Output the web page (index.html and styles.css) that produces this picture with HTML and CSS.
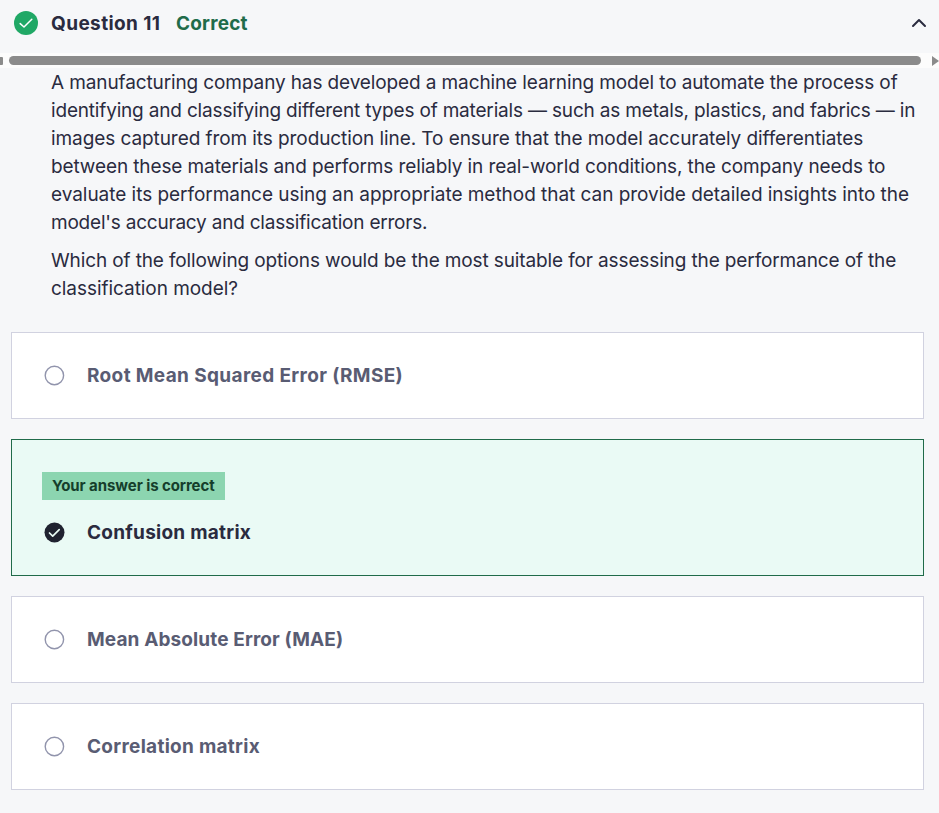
FILE: index.html
```html
<!DOCTYPE html>
<html lang="en">
<head>
<meta charset="utf-8">
<title>Question 11</title>
<link rel="stylesheet" href="styles.css">
</head>
<body>
<header class="question-header">
  <svg class="status" viewBox="0 0 24 24"><circle cx="12" cy="12" r="12"/><path d="M6.200 12.600l3.800 3.400 7.800-7.800"/></svg>
  <h1 class="title">Question 11</h1>
  <span class="result">Correct</span>
  <svg class="chevron" viewBox="0 0 16 12"><path d="M2 9L8 3l6 6"/></svg>
</header>
<div class="scrollbar"><i class="stub"></i><i class="thumb"></i><i class="arrow"></i></div>
<main>
  <section class="prompt">
    <p><span class="l1">A manufacturing company has developed a machine learning model to automate the process of</span>
    <span class="l2">identifying and classifying different types of materials — such as metals, plastics, and fabrics — in</span>
    <span class="l3">images captured from its production line. To ensure that the model accurately differentiates</span>
    <span class="l4">between these materials and performs reliably in real-world conditions, the company needs to</span>
    <span class="l5">evaluate its performance using an appropriate method that can provide detailed insights into the</span>
    <span class="l6">model's accuracy and classification errors.</span></p>
    <p><span class="l7">Which of the following options would be the most suitable for assessing the performance of the</span>
    <span class="l8">classification model?</span></p>
  </section>
  <section class="answers">
    <div class="answer"><div class="choice"><svg class="radio" viewBox="0 0 20 20"><circle cx="10.400" cy="9.500" r="9.200"/></svg><span class="a1">Root Mean Squared Error (RMSE)</span></div></div>
    <div class="answer correct"><div class="badge"><span>Your answer is correct</span></div><div class="choice"><svg class="radio checked" viewBox="0 0 20 20"><circle cx="10.500" cy="10.500" r="10"/><path d="M5.500 11l3.200 3.200 6.500-6.500"/></svg><span class="a2">Confusion matrix</span></div></div>
    <div class="answer"><div class="choice"><svg class="radio" viewBox="0 0 20 20"><circle cx="10.400" cy="9.500" r="9.200"/></svg><span class="a3">Mean Absolute Error (MAE)</span></div></div>
    <div class="answer"><div class="choice"><svg class="radio" viewBox="0 0 20 20"><circle cx="10.400" cy="9.500" r="9.200"/></svg><span class="a4">Correlation matrix</span></div></div>
  </section>
</main>
</body>
</html>
```
FILE: styles.css
```css
* { box-sizing: border-box; }
body { margin: 0; height: 813px; overflow: hidden; background: #f6f7f9; color: #2a2b3f; font-family: Inter, "Liberation Sans", sans-serif; }
svg { display: block; flex: none; overflow: visible; fill: none; stroke-linecap: round; stroke-linejoin: round; }
.question-header { height: 53px; padding: 0 12px 7px 14px; display: flex; align-items: center; font-size: 19px; font-weight: 700; }
.status { width: 24px; height: 24px; margin-right: 13px; }
.status circle { fill: #20a866; }
.status path { stroke: #fff; stroke-width: 1.5; }
.title { margin: 0; width: 125px; font-size: inherit; white-space: nowrap; letter-spacing: .4px; }
.result { color: #206b4a; letter-spacing: .2px; }
.chevron { width: 16px; height: 12px; margin-left: auto; }
.chevron path { stroke: #2a2b3f; stroke-width: 2; }
.scrollbar { height: 15px; display: flex; align-items: center; background: #fcfcfc; }
.stub { width: 3px; height: 8px; background: #8b8b8b; border-radius: 0 1px 1px 0; }
.thumb { width: 912px; height: 9px; margin-left: 6px; border-radius: 5px; background: #8b8b8b; }
.arrow { margin-left: 11px; border-left: 7px solid #8b8b8b; border-top: 5px solid transparent; border-bottom: 5px solid transparent; }
.prompt { padding: 1px 0 0 51px; font-size: 19px; line-height: 28px; }
.prompt p { margin: 0 0 10px; }
.prompt span { display: block; white-space: nowrap; }
.l1 { letter-spacing: -.117px; }
.l2 { letter-spacing: -.177px; }
.l3 { letter-spacing: -.078px; }
.l4 { letter-spacing: -.112px; }
.l5 { letter-spacing: -.038px; }
.l6 { letter-spacing: -.215px; }
.l7 { letter-spacing: -.125px; }
.l8 { letter-spacing: -.05px; }
.answers { padding: 19px 15px 0 11px; display: grid; gap: 20px; }
.answer { height: 87px; padding: 0 32px; border: 1px solid #d1d2e0; background: #fff; color: #595c73; font-size: 19px; font-weight: 700; }
.choice { height: 85px; display: flex; align-items: center; gap: 23px; white-space: nowrap; }
.a1 { letter-spacing: .36px; }
.a2 { letter-spacing: .25px; }
.a3 { letter-spacing: .12px; }
.a4 { letter-spacing: .29px; }
.radio { width: 20px; height: 20px; }
.radio circle { stroke: #9194ac; stroke-width: 1.4; }
.checked circle { fill: #202230; stroke: none; }
.checked path { stroke: #eafaf5; stroke-width: 1.7; }
.correct { height: 137px; padding-top: 32px; border-color: #206b4a; background: #eafaf5; color: #2a2b3f; }
.correct .choice { height: 64px; }
.badge { width: 183px; height: 28px; margin-left: -2px; padding-left: 10px; background: #8cd5b0; color: #153e2b; font-size: 15px; line-height: 28px; letter-spacing: -.08px; white-space: nowrap; }
```
